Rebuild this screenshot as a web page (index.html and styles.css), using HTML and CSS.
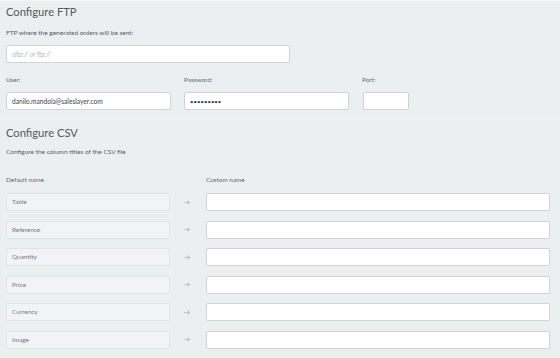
FILE: index.html
```html
<!DOCTYPE html>
<html lang="en">
  <head>
    <meta charset="UTF-8" />
    <meta name="viewport" content="width=device-width, initial-scale=1.0" />
    <title>Configure export</title>
    <link rel="stylesheet" href="styles.css">
  </head>
  <body>
    <section class="block ftp">
      <h2 class="block-title">Configure FTP</h2>
      <p class="block-help">FTP where the generated orders will be sent:</p>
      <input class="field field-url" type="text" placeholder="sftp:// or ftp://" />

      <div class="field-row">
        <div class="field-group">
          <label class="field-label">User:</label>
          <input class="field field-user" type="text" value="danilo.mandola@saleslayer.com" />
        </div>
        <div class="field-group">
          <label class="field-label">Password:</label>
          <input class="field field-pass" type="password" value="secretpw1" />
        </div>
        <div class="field-group">
          <label class="field-label">Port:</label>
          <input class="field field-port" type="text" />
        </div>
      </div>
    </section>

    <section class="block csv">
      <h2 class="block-title">Configure CSV</h2>
      <p class="block-help">Configure the column titles of the CSV file</p>

      <div class="col-heads">
        <span class="field-label col-default">Default name</span>
        <span class="field-label">Custom name</span>
      </div>

      <div class="col-grid">
        <div class="default-name">Table</div>
        <span class="arrow"><svg width="7" height="5" viewBox="0 0 7 5"><path d="M0 2.5h5M3.5 0.8l2 1.7-2 1.7" fill="none" stroke="#c2c6c8" stroke-width="1.2"/></svg></span>
        <input class="field" type="text" />

        <div class="default-name">Reference</div>
        <span class="arrow"><svg width="7" height="5" viewBox="0 0 7 5"><path d="M0 2.5h5M3.5 0.8l2 1.7-2 1.7" fill="none" stroke="#c2c6c8" stroke-width="1.2"/></svg></span>
        <input class="field" type="text" />

        <div class="default-name">Quantity</div>
        <span class="arrow"><svg width="7" height="5" viewBox="0 0 7 5"><path d="M0 2.5h5M3.5 0.8l2 1.7-2 1.7" fill="none" stroke="#c2c6c8" stroke-width="1.2"/></svg></span>
        <input class="field" type="text" />

        <div class="default-name">Price</div>
        <span class="arrow"><svg width="7" height="5" viewBox="0 0 7 5"><path d="M0 2.5h5M3.5 0.8l2 1.7-2 1.7" fill="none" stroke="#c2c6c8" stroke-width="1.2"/></svg></span>
        <input class="field" type="text" />

        <div class="default-name">Currency</div>
        <span class="arrow"><svg width="7" height="5" viewBox="0 0 7 5"><path d="M0 2.5h5M3.5 0.8l2 1.7-2 1.7" fill="none" stroke="#c2c6c8" stroke-width="1.2"/></svg></span>
        <input class="field" type="text" />

        <div class="default-name">Image</div>
        <span class="arrow"><svg width="7" height="5" viewBox="0 0 7 5"><path d="M0 2.5h5M3.5 0.8l2 1.7-2 1.7" fill="none" stroke="#c2c6c8" stroke-width="1.2"/></svg></span>
        <input class="field" type="text" />
      </div>
    </section>
  </body>
</html>
```

FILE: styles.css
```css
/* Reset default styles */
* {
  margin: 0;
  padding: 0;
  box-sizing: border-box;
}

body {
  font-family: Lato, "Liberation Sans", sans-serif;
  background-color: #eceff0;
  color: #555;
  border-top: 1px solid #f6f7f8; /* thin light line on top */
}

.block {
  padding: 0 10px 0 6px;
}

.ftp {
  padding-top: 3px;
  padding-bottom: 8px;
  border-bottom: 1px solid #f6f7f8; /* separator between sections */
}

.block-title {
  font-size: 11.2px;
  font-weight: 400;
  line-height: 16px;
  color: #55595b;
}

.csv .block-title {
  margin-top: 6px;
}

.block-help {
  font-size: 6.5px;
  line-height: 10px;
  margin-top: 8px;
  color: #585c5e;
}

.csv .block-help {
  margin-top: 6px;
}

.field {
  display: block;
  height: 18px;
  background-color: #fff;
  border: 1px solid #cfd3d5;
  border-radius: 2px;
  font-family: Lato, "Liberation Sans", sans-serif;
  font-size: 6.6px;
  color: #444;
  padding: 0 5px;
  outline: none;
}

.field::placeholder {
  color: #b5b9bb;
  font-style: italic;
}

.field-url {
  width: 284px;
  margin-top: 7px;
}

.field-row {
  display: flex;
  gap: 13px;
  margin-top: 12px;
}

.field-group {
  display: flex;
  flex-direction: column;
  gap: 7px;
}

.field-label {
  font-size: 6.4px;
  line-height: 10px;
  color: #666a6c;
}

.field-user,
.field-pass {
  width: 165px;
}

.field-pass {
  font-size: 6px;
  color: #333;
}

.field-port {
  width: 46px;
  margin-left: 1px;
}

.col-heads {
  display: grid;
  grid-template-columns: 200px 1fr;
  margin-top: 18px;
}

.col-grid {
  display: grid;
  grid-template-columns: 164px 36px 1fr;
  row-gap: 9.6px;
  margin-top: 8px;
}

.default-name {
  height: 18px;
  line-height: 16px;
  background-color: #f2f3f4;
  border: 1px solid #e1e4e5;
  border-radius: 2px;
  padding: 0 5px;
  font-size: 6.4px;
  color: #777b7d;
}

.arrow {
  display: flex;
  align-items: center;
  justify-content: center;
  padding-right: 1px;
}
```
